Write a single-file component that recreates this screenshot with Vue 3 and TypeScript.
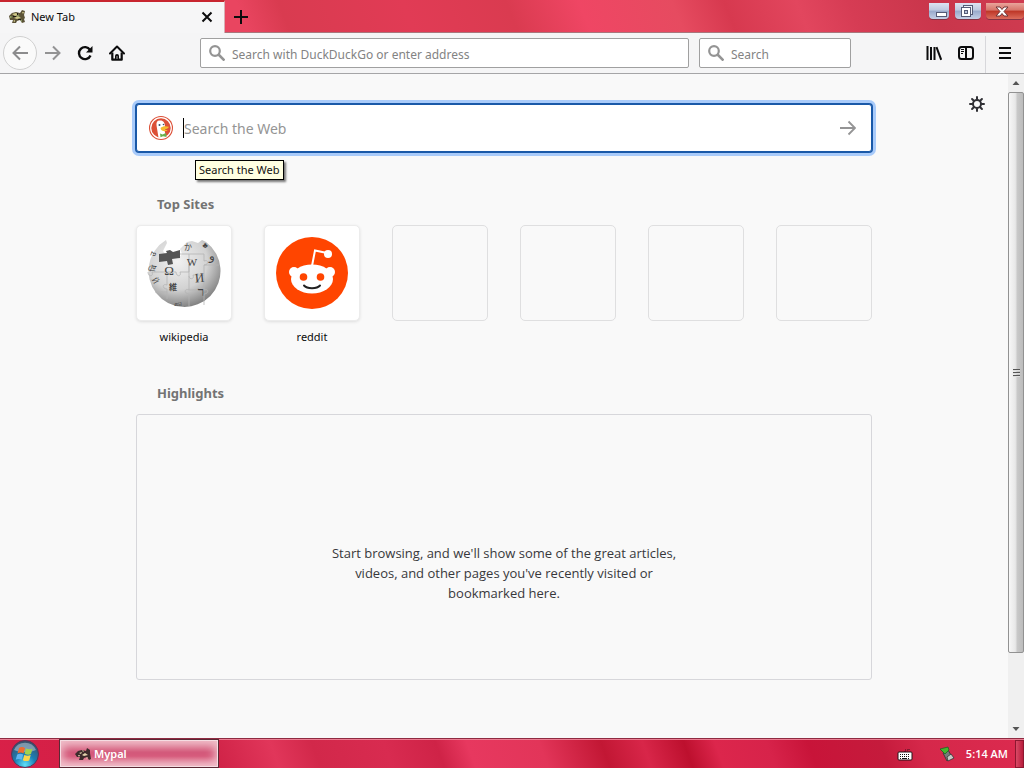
<script setup lang="ts">
import { ref } from 'vue'

interface Site {
  name: string
  icon: 'wikipedia' | 'reddit'
}

const sites: Site[] = [
  { name: 'wikipedia', icon: 'wikipedia' },
  { name: 'reddit', icon: 'reddit' },
]
const emptySlots = 4
const address = ref('')
const search = ref('')
const webSearch = ref('')
const teeth: number[] = [0, 45, 90, 135, 180, 225, 270, 315]
</script>

<template>
  <div class="desktop">
    <header class="titlebar">
      <div class="tab">
        <svg class="i16" viewBox="0 0 16 16" aria-hidden="true">
          <path d="M0 7l3-3 4-1 4 1 2-3 3 1-1 4 1 3-1 1 1 3-3 1-2-3-3 1-1 2-4 0 1-3-3 0z" fill="#5c5338" />
          <path d="M3 5l4-1 3 2-4 1zM5 9l4-2 3 2-4 1zM13 3l2 0-1 2zM4 12l2-1 0 2z" fill="#cfc98a" />
          <path d="M1 7l3 1-3 1zM8 6l3 1-2 1zM12 10l1 2-1 1z" fill="#92ab6c" />
          <path d="M4 7h3v1H4zM9 10h3v1H9zM8 4h1v2H8z" fill="#1d1a14" />
        </svg>
        <span class="tab-title">New Tab</span>
        <button class="tab-close" aria-label="Close tab">
          <svg viewBox="0 0 12 12" class="i12"><path d="M1.500 1.500l9 9M10.500 1.500l-9 9" stroke="#0c0c0d" stroke-width="2" /></svg>
        </button>
      </div>
      <button class="new-tab" aria-label="New tab">
        <svg viewBox="0 0 14 14" class="i14"><path d="M7 0v14M0 7h14" stroke="#0c0c0d" stroke-width="2" /></svg>
      </button>
      <div class="window-buttons">
        <button class="wb min" aria-label="Minimize">
          <svg viewBox="0 0 20 17" width="20" height="17"><rect x="7.500" y="9.500" width="10" height="4" fill="#fff" stroke="#555b76" /></svg>
        </button>
        <button class="wb restore" aria-label="Restore">
          <svg viewBox="0 0 26 17" width="26" height="17">
            <rect x="8.500" y="2.500" width="9" height="9" fill="#eef1f8" stroke="#555b76" />
            <rect x="6.500" y="4.500" width="9" height="9" fill="#fff" stroke="#555b76" />
            <rect x="9.500" y="7.500" width="3" height="3" fill="#b9c3da" stroke="#555b76" />
          </svg>
        </button>
        <button class="wb close" aria-label="Close">
          <svg viewBox="0 0 38 17" width="38" height="17">
            <path d="M10 4h4l2 2.500L18 4h4l-4 4.500 4 4.500h-4l-2-2.500-2 2.500h-4l4-4.500z" fill="#fff" stroke="#6e3437" stroke-width="1" />
          </svg>
        </button>
      </div>
    </header>

    <nav class="toolbar" aria-label="Navigation">
      <button class="back" aria-label="Back">
        <svg viewBox="0 0 16 16" class="i16"><path d="M16 8H1.500M8 1.500L1.500 8 8 14.500" fill="none" stroke="#8c8c8d" stroke-width="2" /></svg>
      </button>
      <button class="tool" aria-label="Forward">
        <svg viewBox="0 0 16 16" class="i16"><path d="M0 8h14.500M8 1.500L14.500 8 8 14.500" fill="none" stroke="#939394" stroke-width="2" /></svg>
      </button>
      <button class="tool" aria-label="Reload">
        <svg viewBox="0 0 16 16" class="i16">
          <path d="M13 4.800A6 6 0 1 0 13.500 10.500" fill="none" stroke="#0c0c0d" stroke-width="2.400" />
          <path d="M15.500 1v6.500H9z" fill="#0c0c0d" />
        </svg>
      </button>
      <button class="tool" aria-label="Home">
        <svg viewBox="0 0 16 16" class="i16">
          <path d="M1 8.500L8 1.500l7 7" fill="none" stroke="#0c0c0d" stroke-width="2" stroke-linecap="round" stroke-linejoin="round" />
          <path d="M3.300 7.500v7.200h9.400V7.500" fill="none" stroke="#0c0c0d" stroke-width="2.200" stroke-linejoin="round" />
          <path d="M6 15v-4a2 2 0 0 1 4 0v4z" fill="#0c0c0d" />
          <path d="M8 11v3" stroke="#aaa" stroke-width="1" />
        </svg>
      </button>
      <span class="spring" />
      <label class="field url">
        <svg viewBox="0 0 16 16" class="i16"><circle cx="6" cy="6" r="4.800" fill="none" stroke="#949494" stroke-width="2.200" /><path d="M9.500 9.500l6 6" stroke="#949494" stroke-width="2.600" /></svg>
        <input v-model="address" type="text" placeholder="Search with DuckDuckGo or enter address" aria-label="Address" />
      </label>
      <label class="field quick">
        <svg viewBox="0 0 16 16" class="i16"><circle cx="6" cy="6" r="4.800" fill="none" stroke="#949494" stroke-width="2.200" /><path d="M9.500 9.500l6 6" stroke="#949494" stroke-width="2.600" /></svg>
        <input v-model="search" type="text" placeholder="Search" aria-label="Search" />
      </label>
      <span class="spring" />
      <button class="tool" aria-label="Library">
        <svg viewBox="0 0 16 16" class="i16"><path d="M1.500 1v14M5 2v13M8.500 2v13" stroke="#0c0c0d" stroke-width="2" /><path d="M10.500 2.200l4.700 12.600" stroke="#0c0c0d" stroke-width="2" /></svg>
      </button>
      <button class="tool" aria-label="Sidebars">
        <svg viewBox="0 0 16 16" class="i16">
          <rect x="1" y="2" width="14" height="12" rx="2.500" fill="none" stroke="#0c0c0d" stroke-width="2" />
          <path d="M8 2v12" stroke="#0c0c0d" stroke-width="2" />
          <path d="M3 4.500h3M3 6.500h3M3 8.500h2" stroke="#0c0c0d" stroke-width="1" />
        </svg>
      </button>
      <span class="divider" />
      <button class="tool menu" aria-label="Menu">
        <svg viewBox="0 0 16 16" class="i16"><path d="M2 3h12M2 8h12M2 13h12" stroke="#0c0c0d" stroke-width="2" /></svg>
      </button>
    </nav>

    <div class="viewport">
      <main class="page">
        <button class="gear" aria-label="Customize your New Tab page">
          <svg viewBox="0 0 16 16" class="i16">
            <circle cx="8" cy="8" r="4" fill="none" stroke="#303035" stroke-width="2" />
            <path v-for="a in teeth" :key="a" d="M8 1v2.500" stroke="#303035" stroke-width="2" stroke-linecap="round" :transform="`rotate(${a} 8 8)`" />
          </svg>
        </button>
        <div class="column">
          <form class="web-search" @submit.prevent>
            <svg class="duck" viewBox="0 0 24 24" aria-hidden="true">
              <circle cx="12" cy="12" r="12" fill="#dc4f36" />
              <circle cx="12" cy="12" r="10.300" fill="none" stroke="#fff" stroke-width="1.200" />
              <path d="M9.500 21.500L7.600 10C7 6.500 8 4.500 10.500 4.500c3.500-.5 5.500 2 5.400 5.500l-.4 4 1.500 7c-2 1.300-5 1.500-7.500.5z" fill="#fff" />
              <path d="M11.500 12c2-2 5-2 8.500-1.200-1 2-3 2.400-5 2.600 1.400.3 2.800.8 3.700.7-1.700 2.200-7 1.200-7.200-2.100z" fill="#f5b92c" />
              <path d="M11 17.500l2.500 1 3.500-1.500.5 4-3.500-.8-2.500 1z" fill="#6ab04b" />
              <circle cx="10.500" cy="9" r="1" fill="#3a536c" /><circle cx="14.500" cy="8.500" r=".8" fill="#3a536c" />
            </svg>
            <span class="caret" />
            <input v-model="webSearch" type="text" placeholder="Search the Web" aria-label="Search the Web" />
            <button class="go" aria-label="Submit search">
              <svg viewBox="0 0 16 16" class="i16"><path d="M0 8h15M8.500 1.500L15 8l-6.500 6.500" fill="none" stroke="#949495" stroke-width="1.800" /></svg>
            </button>
            <div class="tooltip" role="tooltip">Search the Web</div>
          </form>

          <section>
            <h2>Top Sites</h2>
            <ul class="tiles">
              <li v-for="s in sites" :key="s.name">
                <a href="#" class="site">
                  <span class="tile filled">
                    <svg v-if="s.icon === 'wikipedia'" viewBox="0 0 74 74" class="logo">
                      <defs>
                        <radialGradient id="globe" cx="40%" cy="32%" r="70%">
                          <stop offset="0" stop-color="#f2f2f2" /><stop offset=".6" stop-color="#d2d2d2" /><stop offset="1" stop-color="#808080" />
                        </radialGradient>
                      </defs>
                      <path d="M19 4l1 3-4 8 3 4 4 3 8 1 4-5-2-5 4-4 3-3 5-1 6 2 4-3 4 2A36 36 0 1 1 19 4z" fill="url(#globe)" />
                      <path d="M12 18l8-1-1-2 4-1 3 2 7-2v8l-8 1 1 5-5 1-1-4-8 1z" fill="#555" />
                      <g fill="none" stroke="#b4b4b4" stroke-width=".8">
                        <path d="M33 18h9v6c4-2 5 4 0 4v8h-9c2 5-4 5-4 0h-9v13c-5-2-5 4 0 4v10" />
                        <path d="M42 18h15v7c5-2 5 4 0 4v10H46c2 5-5 5-4 0V28M57 29h15M42 40v14c-5-2-5 4 0 4v12M57 39v15c5-2 5 4 0 4v11M20 36H5c2 5-4 5-4 0M42 54h15M20 56H8" />
                      </g>
                      <g fill="#444" font-family="Liberation Serif, serif" text-anchor="middle">
                        <text x="22" y="39" font-size="13">Ω</text>
                        <text x="45" y="30" font-size="11">W</text>
                        <text x="53" y="46" font-size="13" transform="rotate(-5 53 46)">И</text>
                        <text x="26" y="54" font-size="8" font-weight="700" font-family="Noto Sans CJK JP, sans-serif">維</text>
                        <text x="41" y="14" font-size="8" font-family="Noto Sans CJK JP, sans-serif">か</text>
                        <text x="58" y="12" font-size="8">♣</text>
                        <text x="65" y="24" font-size="12">و</text>
                        <text x="54" y="60" font-size="13">ר</text>
                        <text x="9" y="19" font-size="8" transform="rotate(-70 9 19)">उ</text>
                        <text x="9" y="33" font-size="8" transform="rotate(-80 9 33)">वि</text>
                        <text x="6" y="46" font-size="8" transform="rotate(60 6 46)">Й</text>
                        <text x="31" y="70" font-size="7">வி</text>
                      </g>
                    </svg>
                    <svg v-else viewBox="0 0 72 72" class="logo reddit">
                      <circle cx="36" cy="36" r="36" fill="#ff4500" />
                      <path d="M36 29l3-15.500L51 16" fill="none" stroke="#fff" stroke-width="2" />
                      <circle cx="52" cy="17" r="4" fill="#fff" />
                      <circle cx="18" cy="35" r="5" fill="#fff" /><circle cx="54" cy="35" r="5" fill="#fff" />
                      <ellipse cx="36" cy="42" rx="21" ry="14.500" fill="#fff" />
                      <circle cx="27.500" cy="40" r="3.800" fill="#ff4500" /><circle cx="44.500" cy="40" r="3.800" fill="#ff4500" />
                      <path d="M28 48.500c3 3.500 13 3.500 16 0" fill="none" stroke="#222" stroke-width="2" stroke-linecap="round" />
                    </svg>
                  </span>
                  <span class="site-name">{{ s.name }}</span>
                </a>
              </li>
              <li v-for="n in emptySlots" :key="n"><span class="tile" /></li>
            </ul>
          </section>

          <section>
            <h2 class="second">Highlights</h2>
            <div class="highlights">
              <p>Start browsing, and we'll show some of the great articles, videos, and other pages you've recently visited or bookmarked here.</p>
            </div>
          </section>
        </div>
      </main>
      <div class="scrollbar" aria-hidden="true">
        <svg viewBox="0 0 16 18" class="arrow"><path d="M4.500 11h7L8 7z" fill="#555" /></svg>
        <div class="track"><div class="thumb"><i /><i /><i /></div></div>
        <svg viewBox="0 0 16 18" class="arrow"><path d="M4.500 7h7L8 11z" fill="#555" /></svg>
      </div>
    </div>

    <footer class="taskbar">
      <button class="start" aria-label="Start">
        <svg viewBox="0 0 28 28" width="28" height="28">
          <defs>
            <radialGradient id="orb" cx="50%" cy="90%" r="85%">
              <stop offset="0" stop-color="#5fe0f8" /><stop offset=".45" stop-color="#1c7fb4" /><stop offset="1" stop-color="#39506b" />
            </radialGradient>
          </defs>
          <circle cx="14" cy="14" r="13.500" fill="url(#orb)" stroke="#5d3455" />
          <path d="M3 10a12 12 0 0 1 22 0c-7 3-15 3-22 0z" fill="#c9d4dc" opacity=".5" />
          <path d="M8 8c2-1.500 4-1.300 6 0l-1.500 5.500c-2-1.200-4-1.300-6 0z" fill="#ef6b2f" />
          <path d="M15 8.500c2 1 4 1.200 6.500 0L20 14c-2 1-4 .8-6.300-.2z" fill="#a3d24c" />
          <path d="M6.200 14.600c2-1.200 4-1.100 6 0l-1.500 5.200c-2-1-4-1.100-6 0z" fill="#5fb5ef" />
          <path d="M13.300 15c2 1 4 1.100 6.400.1l-1.500 5.300c-2.200 1-4.400.8-6.400-.2z" fill="#fbd54a" />
        </svg>
      </button>
      <button class="task">
        <svg class="i16" viewBox="0 0 16 16" aria-hidden="true">
          <path d="M0 8l3-3 4-1 4 1 1-3 3 2 0 3 1 6-2 1-2-3-3 1-1 2-4 0 1-3-3 0z" fill="#3d2b2c" />
          <path d="M4 7l3-1-1 2zM7 9l3-2 3 2-4 1zM3 9l2 0-1 2zM11 12l2-1-1 2zM7 4l2 1-1 1z" fill="#e2d2ac" />
        </svg>
        <span>Mypal</span>
      </button>
      <div class="tray">
        <svg class="i16 keyboard" viewBox="0 0 16 16" aria-label="Keyboard">
          <path d="M8 6V4h4V2" fill="none" stroke="#3d101c" stroke-dasharray="1 1" />
          <rect x="1" y="6" width="14" height="8" rx="1" fill="#fff" stroke="#241318" />
          <path d="M3 8.500h10M3 10.500h10" stroke="#111" stroke-dasharray="1 1" /><path d="M3 12.500h10" stroke="#111" stroke-dasharray="1 1 5 1" />
        </svg>
        <svg class="i16 usb" viewBox="0 0 16 16" aria-label="Safely remove hardware">
          <path d="M4 7l5-3 4 7-5 4z" fill="#767a78" stroke="#2b3230" stroke-width=".8" />
          <path d="M8 11l4-3 3 4-6 3z" fill="#c9c9c7" stroke="#333" stroke-width=".8" />
          <path d="M1 3l8-2 1 3-4 4z" fill="#45b52e" stroke="#1f6222" stroke-width=".8" />
        </svg>
        <time>5:14 AM</time>
      </div>
      <button class="show-desktop" aria-label="Show desktop" />
    </footer>
  </div>
</template>

<style>
body {
  margin: 0;
}
</style>

<style scoped>
.desktop {
  min-height: 100vh;
  display: flex;
  flex-direction: column;
  background: #f9f9f9;
  color: #0c0c0d;
  font: 12px/20px "Noto Sans", "Open Sans", sans-serif;
}
.desktop * {
  box-sizing: border-box;
}
button {
  margin: 0;
  padding: 0;
  border: 0;
  background: none;
  font: inherit;
  color: inherit;
  display: flex;
  align-items: center;
  justify-content: center;
  flex: none;
}
svg {
  display: block;
  flex: none;
}
.i16 {
  width: 16px;
  height: 16px;
}
.i12 {
  width: 12px;
  height: 12px;
}
.i14 {
  width: 14px;
  height: 14px;
}
input {
  flex: 1;
  min-width: 0;
  padding: 0;
  border: 0;
  outline: 0;
  background: none;
  font: inherit;
  color: inherit;
}
input::placeholder {
  color: #838383;
  opacity: 1;
}

.titlebar {
  display: flex;
  height: 33px;
  background:
    linear-gradient(0deg, #a8767c 1px, transparent 1px),
    linear-gradient(68deg, #e94560 0%, #e94560 24%, #d93b50 28%, #e13b55 40%, #da3b50 50%, #ef4664 57%, #e64b60 66%, #d7394f 71%, #e2465e 78%, #d63c54 83%, #c9364b 91%, #cf3b50 100%);
}
.tab {
  display: flex;
  align-items: center;
  width: 225px;
  padding: 0 11px 2px 9px;
  border-top: 2px solid #c8252f;
  border-right: 1px solid #d9aeb4;
  background: #f6f6f7;
}
.tab-title {
  flex: 1;
  margin-left: 6px;
  font-size: 11px;
}
.new-tab {
  width: 32px;
}
.window-buttons {
  display: flex;
  align-items: flex-start;
  margin-left: auto;
  padding-top: 3px;
}
.wb {
  height: 16px;
  border-radius: 0 0 4px 4px;
  background: linear-gradient(#dde4f2, #bec9df 45%, #98a9cb 50%, #c4d0e6);
  box-shadow: 0 1px 0 #843344;
  overflow: hidden;
}
.min {
  width: 20px;
}
.restore {
  width: 26px;
  margin: 0 5px 0 6px;
}
.close {
  width: 38px;
  background: linear-gradient(#e9a49b, #d67469 45%, #bd3526 50%, #dc6c5c);
}

.toolbar {
  display: flex;
  align-items: center;
  height: 41px;
  padding: 0 3px;
  border-bottom: 1px solid #a5a5a7;
  background: #f5f5f6;
}
.back {
  width: 34px;
  height: 34px;
  border: 1px solid #d0d0d0;
  border-radius: 50%;
  background: #fafafa;
}
.tool {
  width: 32px;
  height: 32px;
}
.spring {
  flex: 67 67 67px;
}
.field {
  display: flex;
  align-items: center;
  gap: 7px;
  height: 30px;
  padding: 0 8px;
  border: 1px solid #a0a0a0;
  border-radius: 2px;
  background: #fff;
}
.field input {
  padding-top: 3px;
}
.url {
  flex: 489 489 489px;
  min-width: 0;
}
.quick {
  width: 152px;
  flex: none;
  margin-left: 10px;
}
.divider {
  align-self: stretch;
  width: 1px;
  margin: 3px 3px 0;
  background: #d7d7db;
}

.viewport {
  flex: 1;
  display: flex;
}
.page {
  position: relative;
  flex: 1;
  min-width: 0;
  padding: 30px 16px 58px;
  background: #f9f9f9;
}
.gear {
  position: absolute;
  top: 22px;
  right: 23px;
}
.column {
  max-width: 736px;
  margin: 0 auto;
}
.web-search {
  position: relative;
  display: flex;
  align-items: center;
  height: 48px;
  padding: 0 15px 0 12px;
  border: 1px solid #1a59a8;
  border-radius: 3px;
  box-shadow: 0 0 0 1px #1a59a8, 0 0 0 4px #a9cbfa;
  background: #fff;
  font-size: 14px;
}
.web-search input {
  padding-top: 2px;
}
.duck {
  width: 24px;
  height: 24px;
}
.caret {
  width: 1px;
  height: 20px;
  margin-left: 10px;
  background: #000;
}
.web-search input::placeholder {
  color: #959595;
}
.tooltip {
  position: absolute;
  left: 58px;
  top: 55px;
  height: 20px;
  padding: 0 3px;
  border: 1px solid #000;
  background: #ffffe1;
  box-shadow: 2px 2px 2px #777;
  font-size: 11px;
  line-height: 18px;
  color: #111;
  white-space: nowrap;
}
h2 {
  margin: 42px 21px 11px;
  font-size: 13px;
  line-height: 20px;
  font-weight: 700;
  color: #737373;
}
h2.second {
  margin-top: 36px;
}
.tiles {
  display: grid;
  grid-template-columns: repeat(6, 96px);
  justify-content: space-between;
  margin: 0;
  padding: 0;
  list-style: none;
}
.site {
  display: block;
  color: inherit;
  text-decoration: none;
}
.tile {
  display: flex;
  align-items: center;
  justify-content: center;
  height: 96px;
  border: 1px solid #dfdfe0;
  border-radius: 5px;
}
.filled {
  border-color: #ececec;
  background: #fff;
  box-shadow: 0 1px 3px #dedede;
}
.logo {
  width: 74px;
  height: 74px;
}
.reddit {
  width: 72px;
  height: 72px;
}
.site-name {
  display: block;
  margin-top: 6px;
  text-align: center;
  font-size: 11px;
}
.highlights {
  display: flex;
  justify-content: center;
  min-height: 266px;
  padding: 128px 16px 0;
  border: 1px solid #d7d7db;
  border-radius: 3px;
}
.highlights p {
  max-width: 352px;
  margin: 0;
  text-align: center;
  font-family: "Open Sans", "Noto Sans", sans-serif;
  font-size: 13px;
  color: #38383b;
}

.scrollbar {
  display: flex;
  flex-direction: column;
  width: 16px;
  background: #f0f0f0;
}
.arrow {
  width: 16px;
  height: 18px;
}
.track {
  flex: 1;
  display: flex;
  flex-direction: column;
  padding-bottom: 67px;
}
.thumb {
  flex: 1;
  display: flex;
  flex-direction: column;
  align-items: center;
  justify-content: center;
  gap: 1px;
  border: 1px solid #929292;
  border-radius: 2px;
  background: linear-gradient(90deg, #f7f7f7, #e8e8e8 45%, #c8c8c8 60%, #bcbcbc);
}
.thumb i {
  width: 7px;
  height: 2px;
  background: #555;
  border-bottom: 1px solid #ddd;
}

.taskbar {
  display: flex;
  align-items: center;
  height: 30px;
  border-top: 1px solid #8f2b42;
  box-shadow: inset 0 1px 0 #eb7f94;
  background: linear-gradient(70deg, #d92048 0%, #cc1f43 20%, #e1365a 27%, #d2284a 31%, #d82b50 38%, #cf2347 43%, #e7385f 46%, #e23559 53%, #c21734 59%, #d82649 63%, #bd102e 67%, #dc264c 70%, #d7234a 75%, #c81439 79%, #c51b3c 86%, #d5284a 90%, #dc2a4f 100%);
  color: #fff;
}
.start {
  width: 28px;
  height: 28px;
  margin: 0 20px 0 11px;
}
.task {
  justify-content: flex-start;
  gap: 3px;
  width: 160px;
  height: 29px;
  padding-left: 15px;
  border: 1px solid #5b2935;
  box-shadow: inset 0 0 0 1px #f5dce2, inset 0 0 10px 3px #f0bfca;
  background: linear-gradient(#e9a4b5, #d3597a 45%, #d5597a 60%, #eeb0bf);
  font-size: 11px;
  font-weight: 600;
}
.tray {
  display: flex;
  align-items: center;
  gap: 26px;
  margin-left: auto;
}
.tray time {
  margin-left: -15px;
  font-family: "Open Sans", "Noto Sans", sans-serif;
  font-size: 11px;
  font-weight: 600;
}
.show-desktop {
  width: 9px;
  height: 28px;
  margin-left: 7px;
  border: 1px solid #8d1730;
  background: linear-gradient(90deg, #d94a66, #b81c3b);
}
</style>
